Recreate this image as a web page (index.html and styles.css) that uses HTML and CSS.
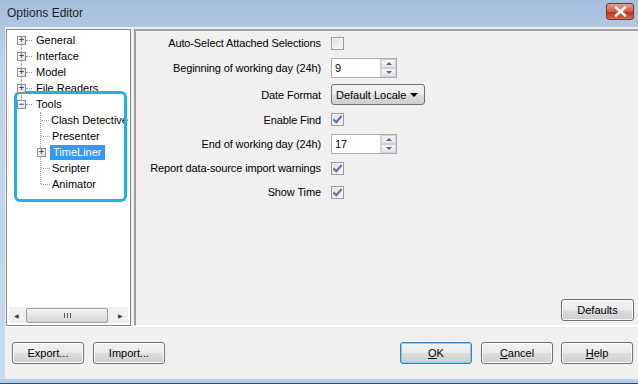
FILE: index.html
```html
<!DOCTYPE html>
<html lang="en">
<head>
    <meta charset="UTF-8">
    <title>Options Editor</title>
    <link rel="stylesheet" href="styles.css">
</head>
<body>
    <div class="window">
        <div class="titlebar">
            <span class="title">Options Editor</span>
            <div class="close-btn">
                <svg width="13" height="11" viewBox="0 0 13 11"><path d="M2 1.5 L11 9.5 M11 1.5 L2 9.5" stroke="#fff" stroke-width="2.6" stroke-linecap="round"/></svg>
            </div>
        </div>

        <div class="client">
            <div class="main">
                <div class="tree-panel">
                    <div class="tree">
                        <div class="node top"><span class="expander">+</span><span class="hline"></span><span class="label">General</span></div>
                        <div class="node top"><span class="expander">+</span><span class="hline"></span><span class="label">Interface</span></div>
                        <div class="node top"><span class="expander">+</span><span class="hline"></span><span class="label">Model</span></div>
                        <div class="node top"><span class="expander">+</span><span class="hline"></span><span class="label">File Readers</span></div>
                        <div class="node top last"><span class="expander">&minus;</span><span class="hline"></span><span class="label">Tools</span></div>
                        <div class="children">
                            <div class="node child"><span class="hline"></span><span class="label">Clash Detective</span></div>
                            <div class="node child"><span class="hline"></span><span class="label">Presenter</span></div>
                            <div class="node child"><span class="expander small">+</span><span class="label selected">TimeLiner</span></div>
                            <div class="node child"><span class="hline"></span><span class="label">Scripter</span></div>
                            <div class="node child"><span class="hline"></span><span class="label">Animator</span></div>
                        </div>
                        <div class="highlight"></div>
                    </div>
                    <div class="hscroll">
                        <span class="arrow">&#9664;</span>
                        <div class="track"><div class="thumb"><span class="grip"></span></div></div>
                        <span class="arrow">&#9654;</span>
                    </div>
                </div>

                <div class="settings">
                    <div class="form">
                        <div class="row">
                            <span class="field-label">Auto-Select Attached Selections</span>
                            <span class="checkbox"></span>
                        </div>
                        <div class="row tall">
                            <span class="field-label">Beginning of working day (24h)</span>
                            <div class="spin">
                                <span class="spin-value">9</span>
                                <div class="spin-btns"><span class="up"></span><span class="down"></span></div>
                            </div>
                        </div>
                        <div class="row taller">
                            <span class="field-label">Date Format</span>
                            <div class="dropdown">Default Locale <span class="caret"></span></div>
                        </div>
                        <div class="row short">
                            <span class="field-label">Enable Find</span>
                            <span class="checkbox checked"></span>
                        </div>
                        <div class="row mid">
                            <span class="field-label">End of working day (24h)</span>
                            <div class="spin">
                                <span class="spin-value">17</span>
                                <div class="spin-btns"><span class="up"></span><span class="down"></span></div>
                            </div>
                        </div>
                        <div class="row">
                            <span class="field-label">Report data-source import warnings</span>
                            <span class="checkbox checked"></span>
                        </div>
                        <div class="row">
                            <span class="field-label">Show Time</span>
                            <span class="checkbox checked"></span>
                        </div>
                    </div>
                    <div class="settings-footer">
                        <button class="btn defaults">Defaults</button>
                    </div>
                </div>
            </div>

            <div class="bottom-bar">
                <button class="btn">Export...</button>
                <button class="btn">Import...</button>
                <span class="spacer"></span>
                <button class="btn default"><u>O</u>K</button>
                <button class="btn"><u>C</u>ancel</button>
                <button class="btn"><u>H</u>elp</button>
            </div>
        </div>
        <div class="frame-bottom"></div>
    </div>
</body>
</html>
```

FILE: styles.css
```css
html, body {
    margin: 0;
    padding: 0;
}

body {
    width: 638px;
    height: 384px;
    overflow: hidden;
    font-family: 'Liberation Sans', Arial, sans-serif;
    font-size: 11px;
    color: #000;
    background: #fff;
}

.window {
    height: 384px;
    display: flex;
    flex-direction: column;
    background: linear-gradient(180deg, #a4bedc, #bcd2ea 60px, #c6daee);
}

.titlebar {
    height: 27px;
    display: flex;
    align-items: center;
    justify-content: space-between;
    padding: 0 4px 0 7px;
    flex: none;
}

.title {
    font-size: 12px;
    color: #1e1e1e;
    margin-top: -1px;
}

.close-btn {
    width: 26px;
    height: 15px;
    margin-top: -4px;
    border: 1px solid #6d3a33;
    border-radius: 3px;
    background: linear-gradient(180deg, #e2a08e, #cf5a42 50%, #b8341b 55%, #d26a4e);
    display: flex;
    align-items: center;
    justify-content: center;
}

.client {
    flex: 1;
    margin-left: 5px;
    background: #f0f0f0;
    display: flex;
    flex-direction: column;
}

.main {
    display: flex;
    gap: 3px;
    padding: 2px 0 0 1px;
    height: 297px;
}

/* tree on the left */
.tree-panel {
    width: 123px;
    border: 1px solid #828790;
    background: #fff;
    display: flex;
    flex-direction: column;
}

.tree {
    flex: 1;
    position: relative;
    padding-top: 2px;
}

.node {
    height: 16px;
    display: flex;
    align-items: center;
    white-space: nowrap;
    position: relative;
}

.node.top {
    padding-left: 10px;
}

.node.top::before {
    content: '';
    position: absolute;
    left: 14px;
    top: 0;
    bottom: 0;
    border-left: 1px dotted #a0a0a0;
}

.node.top:first-child::before {
    top: 8px;
}

.node.last::before {
    bottom: 8px;
}

.expander {
    width: 7px;
    height: 7px;
    border: 1px solid #919191;
    background: linear-gradient(135deg, #fff, #dcdcdc);
    font-size: 9px;
    line-height: 7px;
    text-align: center;
    color: #2b4d86;
    font-weight: bold;
    position: relative;
    z-index: 1;
    flex: none;
}

.hline {
    width: 6px;
    border-top: 1px dotted #a0a0a0;
    margin-right: 2px;
}

.label {
    padding: 0 2px;
    line-height: 15px;
}

.children {
    position: relative;
}

.children::before {
    content: '';
    position: absolute;
    left: 33px;
    top: 0;
    bottom: 8px;
    border-left: 1px dotted #a0a0a0;
}

.node.child {
    padding-left: 34px;
}

.node.child .hline {
    width: 9px;
    margin-right: 0;
}

.node.child .expander.small {
    margin-left: -4px;
    margin-right: 4px;
}

.label.selected {
    background: #3399ff;
    color: #fff;
    outline: 1px dotted #c07a2a;
    outline-offset: -1px;
    padding: 0 3px;
}

.highlight {
    position: absolute;
    left: 7px;
    top: 61px;
    width: 107px;
    height: 105px;
    border: 3px solid #1cb0ef;
    border-radius: 6px;
}

.hscroll {
    height: 16px;
    margin: 0 2px 2px;
    display: flex;
    align-items: center;
    background: #f0f0f0;
}

.arrow {
    width: 15px;
    text-align: center;
    font-size: 6px;
    color: #3c3c3c;
}

.track {
    flex: 1;
    height: 16px;
    display: flex;
    align-items: center;
}

.thumb {
    width: 80px;
    height: 13px;
    margin-left: 2px;
    border: 1px solid #9a9a9a;
    border-radius: 2px;
    background: linear-gradient(180deg, #f6f6f6, #e3e3e3 50%, #d6d6d6);
    display: flex;
    align-items: center;
    justify-content: center;
}

.grip {
    width: 7px;
    height: 5px;
    background: repeating-linear-gradient(90deg, #555 0 1px, transparent 1px 3px);
}

/* settings on the right */
.settings {
    flex: 1;
    border-left: 2px solid #a0a0a0;
    border-top: 2px solid #a0a0a0;
    border-bottom: 1px solid #fff;
    display: flex;
    flex-direction: column;
}

.form {
    flex: 1;
}

.row {
    height: 24px;
    display: flex;
    align-items: center;
}

.row.tall { height: 26px; }
.row.taller { height: 27px; }
.row.short { height: 23px; }
.row.mid { height: 25px; }

.field-label {
    width: 185px;
    text-align: right;
    margin-right: 10px;
    white-space: nowrap;
    letter-spacing: -0.12px;
}

.checkbox {
    width: 11px;
    height: 11px;
    border: 1px solid #9a9a9a;
    background: linear-gradient(135deg, #e0e0e0, #f8f8f8);
    box-shadow: inset 0 0 0 1px #f4f4f4;
    position: relative;
}

.checkbox.checked::after {
    content: '';
    position: absolute;
    left: 3px;
    top: 0;
    width: 3px;
    height: 7px;
    border-right: 2px solid #5a6f9c;
    border-bottom: 2px solid #5a6f9c;
    transform: rotate(40deg);
}

.spin {
    width: 64px;
    height: 18px;
    border: 1px solid #abadb3;
    background: #fff;
    display: flex;
    align-items: center;
}

.spin-value {
    flex: 1;
    padding-left: 3px;
}

.spin-btns {
    width: 15px;
    height: 18px;
    display: flex;
    flex-direction: column;
    border-left: 1px solid #d5d5d5;
}

.spin-btns span {
    flex: 1;
    display: flex;
    align-items: center;
    justify-content: center;
    background: linear-gradient(180deg, #f5f5f5, #e6e6e6);
    border: 1px solid #d0d0d0;
}

.spin-btns .up::after {
    content: '';
    border: 3px solid transparent;
    border-bottom: 3px solid #4b6a98;
    border-top: 0;
}

.spin-btns .down::after {
    content: '';
    border: 3px solid transparent;
    border-top: 3px solid #4b6a98;
    border-bottom: 0;
}

.dropdown {
    width: 84px;
    height: 19px;
    padding: 0 4px;
    border: 1px solid #707070;
    border-radius: 3px;
    background: linear-gradient(180deg, #f2f2f2, #ebebeb 50%, #dddddd 51%, #cfcfcf);
    display: flex;
    align-items: center;
    justify-content: space-between;
}

.caret {
    border: 4px solid transparent;
    border-top: 4px solid #000;
    border-bottom: 0;
    margin-right: 2px;
}

.settings-footer {
    display: flex;
    justify-content: flex-end;
    padding: 0 4px 4px 0;
}

/* buttons */
.btn {
    font-family: inherit;
    font-size: 11px;
    color: #000;
    height: 22px;
    width: 72px;
    padding: 0;
    border: 1px solid #707070;
    border-radius: 3px;
    background: linear-gradient(180deg, #f2f2f2, #ebebeb 50%, #dddddd 51%, #cfcfcf);
    box-shadow: inset 0 0 0 1px #fbfbfb;
}

.btn.default {
    border-color: #3c7fb1;
    box-shadow: inset 0 0 0 1px #7dd4f5;
}

.btn.defaults {
    width: 73px;
}

.bottom-bar {
    flex: 1;
    display: flex;
    align-items: center;
    gap: 8px;
    padding: 0 5px 0 7px;
    border-top: 1px solid #fff;
}

.bottom-bar .btn:nth-child(2) {
    margin-left: 1px;
}

.bottom-bar .btn.default {
    margin-right: 1px;
}

.spacer {
    flex: 1;
}

.frame-bottom {
    height: 4px;
    border-bottom: 1px solid #3b4a5c;
    background: #b6cde8;
    flex: none;
}
```
